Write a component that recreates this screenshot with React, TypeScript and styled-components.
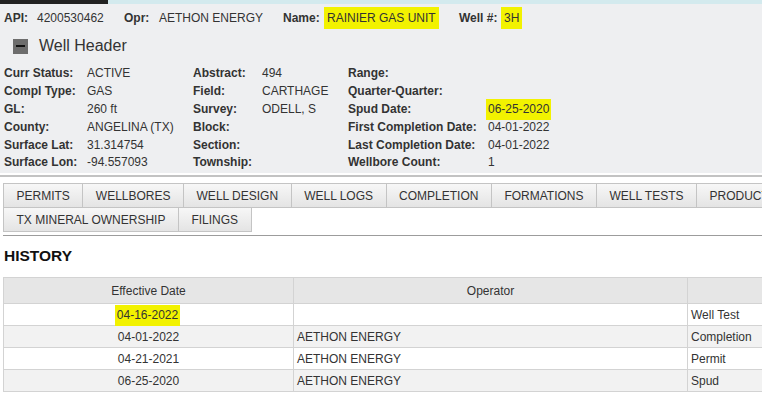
import styled, { createGlobalStyle } from "styled-components";

const GlobalStyle = createGlobalStyle`
  html, body {
    margin: 0;
    padding: 0;
    background: #ffffff;
    overflow: hidden;
  }
  body {
    font-family: "Liberation Sans", Arial, sans-serif;
    font-size: 12px;
    color: #333333;
  }
`;

const Page = styled.div`
  width: 762px;
  height: 394px;
  overflow: hidden;
`;

const TopStrip = styled.div`
  display: flex;
  height: 4px;
`;

const StripSegment = styled.div<{ $dark?: boolean }>`
  flex: ${(p) => (p.$dark ? "0 0 108px" : "1")};
  background: ${(p) => (p.$dark ? "#222222" : "#d3eaee")};
`;

const HeaderPanel = styled.section`
  background: #eeeff1;
  padding: 0 0 2px 4px;
`;

const IdRow = styled.div`
  display: flex;
  align-items: center;
  height: 27px;
`;

const IdItem = styled.div<{ $w: number }>`
  display: flex;
  align-items: center;
  width: ${(p) => p.$w}px;
  flex: none;
`;

const Label = styled.span<{ $w?: number }>`
  font-weight: bold;
  color: #333;
  width: ${(p) => (p.$w ? `${p.$w}px` : "auto")};
  flex: none;
`;

const Highlight = styled.span`
  background: #f2f200;
  padding: 4px 3px 4px;
  margin-left: -3px;
`;

const SectionToggle = styled.div`
  display: flex;
  align-items: center;
  height: 28px;
  padding: 1px 0 0 9px;
  margin-bottom: 3px;
`;

const MinusBox = styled.span`
  width: 15px;
  height: 15px;
  background: #6d6d6d;
  display: flex;
  align-items: center;
  justify-content: center;
  margin-right: 11px;
  &::after {
    content: "";
    width: 9px;
    height: 2px;
    background: #111;
  }
`;

const SectionTitle = styled.span`
  font-size: 16px;
  color: #333;
`;

const InfoGrid = styled.div`
  display: grid;
  grid-template-columns: 83px 106px 69px 86px 140px 1fr;
  grid-auto-rows: 17.9px;
  align-items: center;
  padding-top: 1px;
`;

const Value = styled.span`
  color: #333;
`;

const DateHighlight = styled.span`
  background: #f2f200;
  padding: 3px 2px 4px;
  margin-left: -2px;
`;

const TabsArea = styled.div`
  border-top: 2px solid #c3c3c3;
  margin-top: 2px;
  padding: 6px 0 0 3px;
`;

const TabList = styled.div`
  display: flex;
  flex-wrap: wrap;
  width: 840px;
  border-bottom: 1px solid #9c9c9c;
  padding-bottom: 4px;
`;

const Tab = styled.div`
  height: 23px;
  padding: 0 12.5px;
  display: flex;
  align-items: center;
  border: 1px solid #c4c4c4;
  margin: 0 -1px -1px 0;
  background: linear-gradient(#f7f7f7, #e4e4e4);
  color: #333;
  white-space: nowrap;
`;

const HistoryTitle = styled.h2`
  margin: 0;
  padding: 11px 0 0 4px;
  height: 31px;
  box-sizing: border-box;
  font-size: 15.5px;
  font-weight: bold;
  color: #111;
`;

const Table = styled.table`
  margin: 10px 0 0 3px;
  border-collapse: collapse;
  width: 860px;
  table-layout: fixed;
`;

const HeadCell = styled.th<{ $w: number }>`
  width: ${(p) => p.$w}px;
  height: 25px;
  background: #e6e6e6;
  border: 1px solid #d3d3d3;
  font-weight: normal;
  text-align: center;
  color: #333;
  padding: 0;
`;

const Row = styled.tr<{ $alt: boolean }>`
  background: ${(p) => (p.$alt ? "#f2f2f2" : "#ffffff")};
`;

const Cell = styled.td<{ $center?: boolean }>`
  height: 21px;
  border: 1px solid #d3d3d3;
  padding: 0 3px;
  text-align: ${(p) => (p.$center ? "center" : "left")};
  color: #333;
  white-space: nowrap;
`;

const tabs = [
  "PERMITS",
  "WELLBORES",
  "WELL DESIGN",
  "WELL LOGS",
  "COMPLETION",
  "FORMATIONS",
  "WELL TESTS",
  "PRODUCTION",
  "TX MINERAL OWNERSHIP",
  "FILINGS",
];

const history = [
  { date: "04-16-2022", op: "", type: "Well Test", mark: true },
  { date: "04-01-2022", op: "AETHON ENERGY", type: "Completion" },
  { date: "04-21-2021", op: "AETHON ENERGY", type: "Permit" },
  { date: "06-25-2020", op: "AETHON ENERGY", type: "Spud" },
];

export default function App() {
  return (
    <Page>
      <GlobalStyle />
      <TopStrip>
        <StripSegment $dark />
        <StripSegment />
      </TopStrip>
      <HeaderPanel>
        <IdRow>
          <IdItem $w={120}>
            <Label $w={33}>API:</Label>
            <Value>4200530462</Value>
          </IdItem>
          <IdItem $w={159}>
            <Label $w={35}>Opr:</Label>
            <Value>AETHON ENERGY</Value>
          </IdItem>
          <IdItem $w={176}>
            <Label $w={44}>Name:</Label>
            <Highlight>RAINIER GAS UNIT</Highlight>
          </IdItem>
          <IdItem $w={120}>
            <Label $w={45}>Well #:</Label>
            <Highlight>3H</Highlight>
          </IdItem>
        </IdRow>
        <SectionToggle>
          <MinusBox />
          <SectionTitle>Well Header</SectionTitle>
        </SectionToggle>
        <InfoGrid>
          <Label>Curr Status:</Label>
          <Value>ACTIVE</Value>
          <Label>Abstract:</Label>
          <Value>494</Value>
          <Label>Range:</Label>
          <Value />

          <Label>Compl Type:</Label>
          <Value>GAS</Value>
          <Label>Field:</Label>
          <Value>CARTHAGE</Value>
          <Label>Quarter-Quarter:</Label>
          <Value />

          <Label>GL:</Label>
          <Value>260 ft</Value>
          <Label>Survey:</Label>
          <Value>ODELL, S</Value>
          <Label>Spud Date:</Label>
          <Value>
            <DateHighlight>06-25-2020</DateHighlight>
          </Value>

          <Label>County:</Label>
          <Value>ANGELINA (TX)</Value>
          <Label>Block:</Label>
          <Value />
          <Label>First Completion Date:</Label>
          <Value>04-01-2022</Value>

          <Label>Surface Lat:</Label>
          <Value>31.314754</Value>
          <Label>Section:</Label>
          <Value />
          <Label>Last Completion Date:</Label>
          <Value>04-01-2022</Value>

          <Label>Surface Lon:</Label>
          <Value>-94.557093</Value>
          <Label>Township:</Label>
          <Value />
          <Label>Wellbore Count:</Label>
          <Value>1</Value>
        </InfoGrid>
      </HeaderPanel>
      <TabsArea>
        <TabList>
          {tabs.map((t) => (
            <Tab key={t}>{t}</Tab>
          ))}
        </TabList>
      </TabsArea>
      <HistoryTitle>HISTORY</HistoryTitle>
      <Table>
        <thead>
          <tr>
            <HeadCell $w={289}>Effective Date</HeadCell>
            <HeadCell $w={393}>Operator</HeadCell>
            <HeadCell $w={178}></HeadCell>
          </tr>
        </thead>
        <tbody>
          {history.map((h, i) => (
            <Row key={h.date} $alt={i % 2 === 1}>
              <Cell $center>
                {h.mark ? <DateHighlight>{h.date}</DateHighlight> : h.date}
              </Cell>
              <Cell>{h.op}</Cell>
              <Cell>{h.type}</Cell>
            </Row>
          ))}
        </tbody>
      </Table>
    </Page>
  );
}
